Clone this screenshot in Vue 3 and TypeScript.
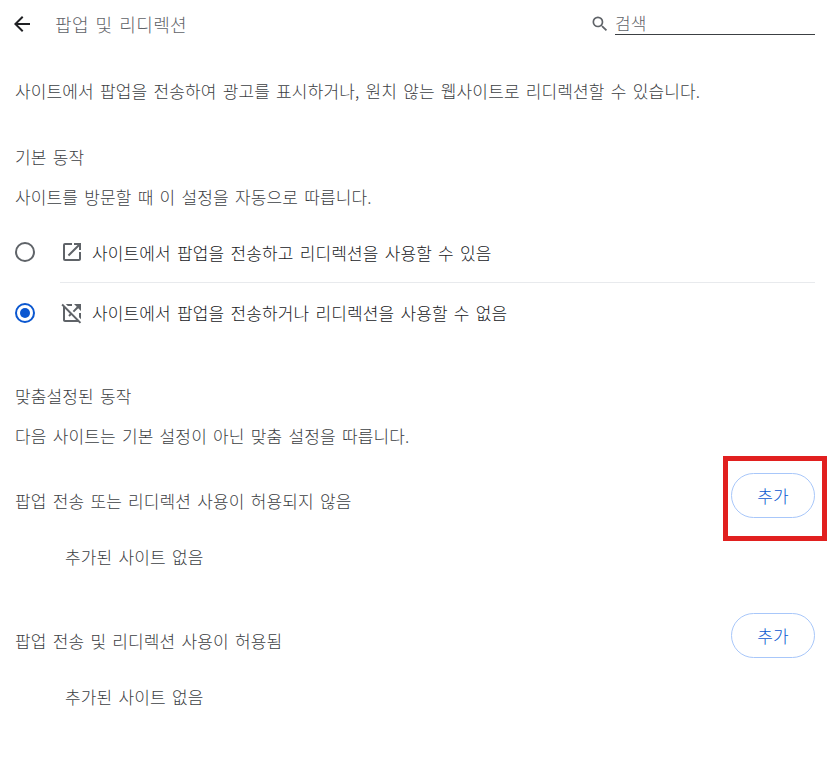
<script setup lang="ts">
const none = '추가된 사이트 없음'
</script>

<template>
  <div class="page">
    <header class="top">
      <svg class="back" width="24" height="24" viewBox="0 0 24 24"><path d="M20 11H7.83l5.59-5.59L12 4l-8 8 8 8 1.41-1.41L7.83 13H20z" fill="#202124"/></svg>
      <h1 class="title">팝업 및 리디렉션</h1>
      <div class="search">
        <svg width="20" height="20" viewBox="0 0 24 24"><path d="M15.5 14h-.79l-.28-.27A6.47 6.47 0 0 0 16 9.5 6.5 6.5 0 1 0 9.5 16c1.61 0 3.09-.59 4.23-1.57l.27.28v.79l5 4.99L20.49 19l-4.99-5zm-6 0C7.01 14 5 11.99 5 9.5S7.01 5 9.5 5 14 7.01 14 9.5 11.99 14 9.5 14z" fill="#5f6368"/></svg>
        <div class="field">검색</div>
      </div>
    </header>

    <p class="intro">사이트에서 팝업을 전송하여 광고를 표시하거나, 원치 않는 웹사이트로 리디렉션할 수 있습니다.</p>

    <section class="default">
      <h2 class="head">기본 동작</h2>
      <p class="sub">사이트를 방문할 때 이 설정을 자동으로 따릅니다.</p>
      <div class="option first">
        <span class="radio"></span>
        <svg class="opt-icon" width="24" height="24" viewBox="0 0 24 24"><path d="M19 19H5V5h7V3H5a2 2 0 0 0-2 2v14a2 2 0 0 0 2 2h14c1.1 0 2-.9 2-2v-7h-2v7zM14 3v2h3.59l-9.83 9.83 1.41 1.41L19 6.41V10h2V3h-7z" fill="#5f6368"/></svg>
        <span class="opt-text">사이트에서 팝업을 전송하고 리디렉션을 사용할 수 있음</span>
      </div>
      <div class="rule"></div>
      <div class="option second">
        <span class="radio on"></span>
        <svg class="opt-icon" width="24" height="24" viewBox="0 0 24 24"><path d="M16.79 5.8 14 3h7v7l-2.79-2.79-4.09 4.09-1.41-1.41 4.08-4.09zM19 12v4.17l2 2V12h-2zm.78 10.61L18.17 21H5c-1.11 0-2-.9-2-2V5.83L1.39 4.22 2.8 2.81l18.38 18.38-1.4 1.42zM16.17 19l-4.88-4.88-1.59 1.59-1.41-1.41 1.59-1.59L5 7.83V19h11.17zM7.83 5H12V3H5.83l2 2z" fill="#5f6368"/></svg>
        <span class="opt-text">사이트에서 팝업을 전송하거나 리디렉션을 사용할 수 없음</span>
      </div>
    </section>

    <section class="custom">
      <h2 class="head">맞춤설정된 동작</h2>
      <p class="sub">다음 사이트는 기본 설정이 아닌 맞춤 설정을 따릅니다.</p>
      <div class="list-head block-one">
        <span class="list-title">팝업 전송 또는 리디렉션 사용이 허용되지 않음</span>
        <button class="add">추가</button>
      </div>
      <div class="empty">{{ none }}</div>
      <div class="list-head block-two">
        <span class="list-title">팝업 전송 및 리디렉션 사용이 허용됨</span>
        <button class="add">추가</button>
      </div>
      <div class="empty">{{ none }}</div>
    </section>

    <div class="highlight"></div>
  </div>
</template>

<style scoped>
.page {
  position: relative;
  width: 840px;
  height: 775px;
  overflow: hidden;
  background: #fff;
  font-family: "Noto Sans CJK KR", "Noto Sans", sans-serif;
  font-size: 17px;
  font-weight: 300;
  word-spacing: 2.3px;
  letter-spacing: 0.12px;
  color: #5f6368;
  box-sizing: border-box;
  padding: 0 25px 0 15px;
}
.top {
  display: flex;
  align-items: center;
  height: 48px;
}
.back { margin-left: -5px; flex: none; }
.title {
  margin: 0 0 0 21px;
  font-size: 18px;
  font-weight: 300;
  letter-spacing: 0.4px;
  color: #5f6368;
  flex: 1;
}
.search {
  display: flex;
  align-items: center;
  gap: 5px;
  width: 225px;
}
.field {
  flex: 1;
  height: 20px;
  line-height: 18px;
  border-bottom: 1px solid #3c4043;
  color: #5f6368;
}
.intro { margin: 31px 0 0; line-height: 24px; height: 24px; color: #3c4043; white-space: nowrap; }
.default { margin-top: 42px; }
.head { margin: 0; font-size: 17px; font-weight: 300; line-height: 24px; color: #3c4043; }
.sub { margin: 16px 0 0; line-height: 24px; color: #3c4043; }
.option { display: flex; align-items: center; height: 60px; }
.first { margin-top: 13px; }
.second { height: 59px; }
.radio {
  width: 20px;
  height: 20px;
  border: 2px solid #5f6368;
  border-radius: 50%;
  box-sizing: border-box;
  flex: none;
  position: relative;
}
.radio.on { border-color: #0b57d0; }
.radio.on::after {
  content: "";
  position: absolute;
  inset: 3px;
  border-radius: 50%;
  background: #0b57d0;
}
.opt-icon { margin-left: 25px; flex: none; }
.opt-text { margin-left: 8px; color: #202124; }
.rule { margin-left: 45px; height: 1px; background: #e8eaed; }
.custom { margin-top: 42px; }
.list-head { display: flex; align-items: center; justify-content: space-between; height: 46px; }
.block-one { margin-top: 24px; }
.block-two { margin-top: 43px; }
.list-title { color: #3c4043; margin-top: 10px; }
.add {
  width: 84px;
  height: 45px;
  border: 1px solid #a8c7fa;
  border-radius: 23px;
  background: #fff;
  color: #0b57d0;
  font: inherit;
  letter-spacing: inherit;
  padding: 0;
}
.empty { margin: 27px 0 0 50px; line-height: 24px; height: 24px; color: #3c4043; }
.highlight {
  position: absolute;
  left: 723px;
  top: 456px;
  width: 104px;
  height: 85px;
  border: 5px solid #e1201f;
  box-sizing: border-box;
}
</style>
